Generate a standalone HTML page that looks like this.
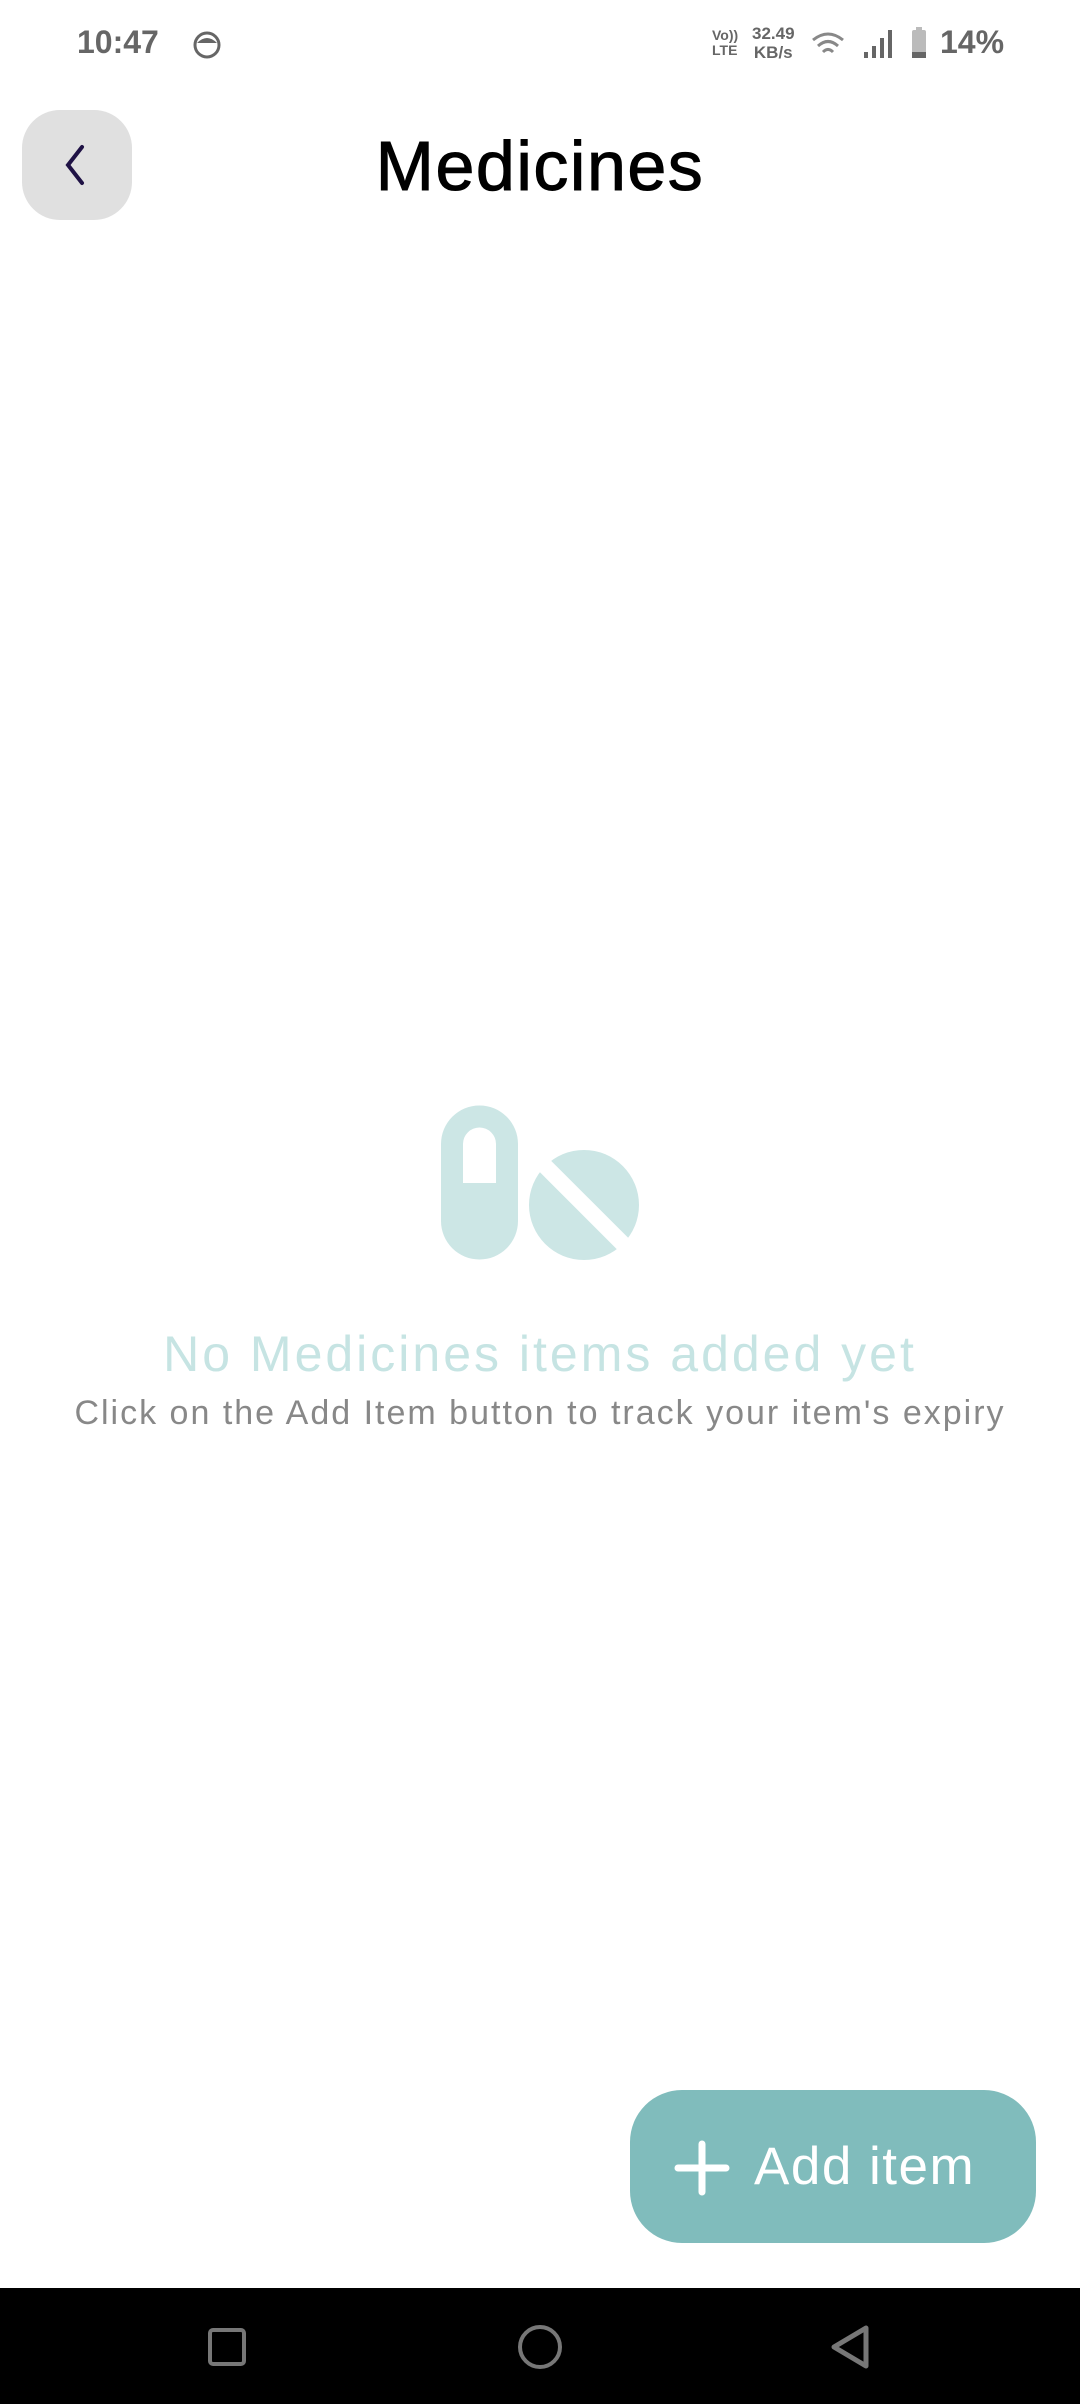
<!DOCTYPE html>
<html><head><meta charset="utf-8"><style>
*{margin:0;padding:0;box-sizing:border-box}
body{width:1080px;height:2404px;background:#fff;position:relative;overflow:hidden;font-family:"Liberation Sans",sans-serif}
.abs{position:absolute}
</style></head><body>
<div class="abs" style="left:77px;top:24px;font-size:32px;font-weight:bold;color:#666">10:47</div>
<svg class="abs" style="left:192px;top:30px" width="30" height="30" viewBox="0 0 30 30"><circle cx="15" cy="15" r="12" fill="none" stroke="#666" stroke-width="3"/><path d="M5 13 Q15 3 25 13" fill="#666"/></svg>
<div class="abs" style="left:712px;top:28px;font-size:14px;font-weight:bold;color:#666;line-height:15px">Vo))<br>LTE</div>
<div class="abs" style="left:752px;top:24px;font-size:17px;font-weight:bold;color:#666;line-height:19px;text-align:center">32.49<br>KB/s</div>
<svg class="abs" style="left:810px;top:28px" width="36" height="34" viewBox="0 0 36 34"><path d="M3 12 Q18 0 33 12 M8 18 Q18 9 28 18 M13 24 Q18 19 23 24" fill="none" stroke="#888" stroke-width="3"/></svg>
<svg class="abs" style="left:862px;top:28px" width="36" height="32" viewBox="0 0 36 32"><rect x="2" y="24" width="4" height="6" fill="#666"/><rect x="10" y="18" width="4" height="12" fill="#666"/><rect x="18" y="10" width="4" height="20" fill="#666"/><rect x="26" y="2" width="4" height="28" fill="#666"/></svg>
<svg class="abs" style="left:910px;top:26px" width="18" height="34" viewBox="0 0 18 34"><rect x="2" y="4" width="14" height="28" rx="2" fill="#bbb"/><rect x="6" y="1" width="6" height="3" fill="#bbb"/><rect x="2" y="26" width="14" height="6" fill="#666"/></svg>
<div class="abs" style="left:940px;top:24px;font-size:32px;font-weight:bold;color:#666">14%</div>

<div class="abs" style="left:22px;top:110px;width:110px;height:110px;border-radius:38px;background:#e0e0e0"></div>
<svg class="abs" style="left:60px;top:142px" width="30" height="46" viewBox="0 0 30 46"><path d="M22 5 L8 23 L22 41" fill="none" stroke="#1f1245" stroke-width="4" stroke-linecap="round"/></svg>
<div class="abs" style="left:0;width:1080px;top:126px;text-align:center;font-size:70px;color:#000;letter-spacing:1.5px;-webkit-text-stroke:1px #000">Medicines</div>

<svg class="abs" style="left:430px;top:1100px" width="220" height="170" viewBox="430 1100 220 170">
<circle cx="584" cy="1205" r="55" fill="#cce6e5"/>
<line x1="535" y1="1156" x2="645" y2="1266" stroke="#fff" stroke-width="16"/>
<path fill-rule="evenodd" fill="#cce6e5" d="M441 1144 a38.5 38.5 0 0 1 77 0 V1221 a38.5 38.5 0 0 1 -77 0 Z M463 1183 V1144 a16.5 16.5 0 0 1 33 0 V1183 Z"/>
</svg>

<div class="abs" style="left:0;width:1080px;top:1325px;text-align:center;font-size:50px;color:#c6e4e3;letter-spacing:3px">No Medicines items added yet</div>
<div class="abs" style="left:0;width:1080px;top:1394px;text-align:center;font-size:34px;color:#888;letter-spacing:2px">Click on the Add Item button to track your item's expiry</div>

<div class="abs" style="left:630px;top:2090px;width:406px;height:153px;border-radius:52px;background:#80bcbc"></div>
<svg class="abs" style="left:674px;top:2140px" width="56" height="56" viewBox="0 0 56 56"><path d="M28 4 V52 M4 28 H52" stroke="#fff" stroke-width="7" stroke-linecap="round"/></svg>
<div class="abs" style="left:754px;top:2136px;font-size:53px;color:#fff;letter-spacing:1.5px">Add item</div>

<div class="abs" style="left:0;top:2288px;width:1080px;height:116px;background:#000"></div>
<div class="abs" style="left:208px;top:2328px;width:38px;height:38px;border:4px solid #777;border-radius:5px"></div>
<div class="abs" style="left:518px;top:2325px;width:44px;height:44px;border:4px solid #777;border-radius:50%"></div>
<svg class="abs" style="left:826px;top:2322px" width="48" height="50" viewBox="0 0 48 50"><path d="M40 6 L8 25 L40 44 Z" fill="none" stroke="#777" stroke-width="5" stroke-linejoin="round"/></svg>
</body></html>
